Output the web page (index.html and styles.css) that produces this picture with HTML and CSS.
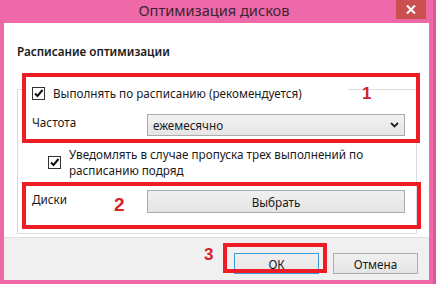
FILE: index.html
```html
<!DOCTYPE html>
<html lang="ru">
<head>
    <title>Оптимизация дисков</title>
    <meta charset="UTF-8">
    <link rel="stylesheet" href="styles.css">
</head>
<body>

<div class="window">
    <div class="titlebar">
        <span class="title">Оптимизация дисков</span>
        <span class="close">
            <svg width="10" height="9" viewBox="0 0 10 9"><path d="M1 0.5 L9 8.5 M9 0.5 L1 8.5" stroke="#fff" stroke-width="2"/></svg>
        </span>
    </div>

    <div class="client">
        <div class="content">
            <h2 class="section">Расписание оптимизации</h2>

            <fieldset class="group">
                <legend class="check-row">
                    <span class="checkbox"><svg width="11" height="11" viewBox="0 0 11 11"><path d="M2 5.5 L4.5 8 L9.5 2" fill="none" stroke="#111" stroke-width="2"/></svg></span>
                    <span>Выполнять по расписанию (рекомендуется)</span>
                </legend>

                <div class="field">
                    <span class="field-label">Частота</span>
                    <div class="select">
                        <span>ежемесячно</span>
                        <svg width="9" height="6" viewBox="0 0 9 6"><path d="M1 1 L4.5 4.5 L8 1" fill="none" stroke="#222" stroke-width="1.8"/></svg>
                    </div>
                </div>

                <div class="check-row notify">
                    <span class="checkbox"><svg width="11" height="11" viewBox="0 0 11 11"><path d="M2 5.5 L4.5 8 L9.5 2" fill="none" stroke="#111" stroke-width="2"/></svg></span>
                    <span>Уведомлять в случае пропуска трех выполнений по<br>расписанию подряд</span>
                </div>

                <div class="field disks">
                    <span class="field-label">Диски</span>
                    <button class="btn wide">Выбрать</button>
                </div>
            </fieldset>
        </div>

        <div class="footer">
            <button class="btn default">ОК</button>
            <button class="btn">Отмена</button>
        </div>
    </div>

    <!-- annotations drawn over the dialog -->
    <div class="mark mark-1"></div>
    <div class="mark mark-2"></div>
    <div class="mark mark-3"></div>
    <span class="num num-1">1</span>
    <span class="num num-2">2</span>
    <span class="num num-3">3</span>
</div>

</body>
</html>
```

FILE: styles.css
```css
* {
  box-sizing: border-box;
}

body {
  margin: 0;
  background: #ef68a8;
  font-family: "Noto Sans", "Open Sans", sans-serif;
  font-size: 11.7px;
  color: #1a1a1a;
}

.window {
  position: relative;
  width: 436px;
  height: 284px;
  background: #ef68a8;
  border-right: 3px solid #d95a98;
}

/* Title bar */
.titlebar {
  display: flex;
  align-items: flex-start;
  height: 23px;
}

.titlebar .title {
  flex: 1;
  padding-left: 32px;
  text-align: center;
  font-size: 14.6px;
  line-height: 20px;
  color: #3a2633;
}

.close {
  display: flex;
  align-items: center;
  justify-content: center;
  width: 30px;
  height: 19px;
  margin-right: 7px;
  background: #c9504f;
}

/* Client area */
.client {
  margin: 0 4px 0 4px;
  height: 257px;
  display: flex;
  flex-direction: column;
}

.content {
  height: 214px;
  background: #fff;
  padding: 20px 12px 0 13px;
}

.section {
  margin: 0;
  font-size: 11.7px;
  line-height: 16px;
  font-weight: 600;
}

.group {
  margin: 18px 0 0 0;
  padding: 0 11px 20px 14px;
  border: 1px solid #dcdcdc;
}

.group legend {
  margin-left: -6px;
  padding: 8px 46px 0 6px;
}

.check-row {
  display: flex;
  align-items: center;
  gap: 8px;
  line-height: 16px;
}

.checkbox {
  display: flex;
  align-items: center;
  justify-content: center;
  width: 13px;
  height: 13px;
  border: 1px solid #333;
  background: #fff;
}

.field {
  display: flex;
  align-items: flex-start;
  margin-top: 13px;
}

.field-label {
  width: 115px;
  line-height: 16px;
}

.select {
  flex: 1;
  display: flex;
  align-items: center;
  justify-content: space-between;
  height: 22px;
  padding: 0 5px 0 5px;
  border: 1px solid #acacac;
  background: linear-gradient(#f2f2f2, #e5e5e5);
}

.notify {
  margin-top: 10px;
  margin-left: 16px;
}

.disks {
  margin-top: 12px;
}

.disks .field-label {
  padding-top: 1px;
}

.btn {
  height: 21px;
  width: 85px;
  padding: 0;
  border: 1px solid #acacac;
  background: linear-gradient(#f0f0f0, #e5e5e5);
  font-family: inherit;
  font-size: 11.7px;
  color: #1a1a1a;
}

.btn.wide {
  flex: 1;
  height: 23px;
}

.btn.default {
  border-color: #3c9ad8;
}

/* Footer */
.footer {
  flex: 1;
  display: flex;
  justify-content: flex-end;
  gap: 14px;
  padding: 15px 11px 0 0;
  background: #f0f0f0;
  border-top: 1px solid #dfdfdf;
}

/* Red annotations */
.mark {
  position: absolute;
  border: 4px solid #ee1c24;
}

.mark-1 {
  left: 22px;
  top: 73px;
  width: 398px;
  height: 70px;
}

.mark-2 {
  left: 22px;
  top: 182px;
  width: 399px;
  height: 47px;
}

.mark-3 {
  left: 223px;
  top: 243px;
  width: 104px;
  height: 30px;
}

.num {
  position: absolute;
  font-family: "Liberation Sans", Arial, sans-serif;
  font-weight: bold;
  font-size: 17px;
  line-height: 17px;
  color: #d2232a;
}

.num-1 {
  left: 362px;
  top: 85px;
}

.num-2 {
  left: 114px;
  top: 195px;
  font-size: 19px;
  line-height: 19px;
}

.num-3 {
  left: 204px;
  top: 246px;
}
```
